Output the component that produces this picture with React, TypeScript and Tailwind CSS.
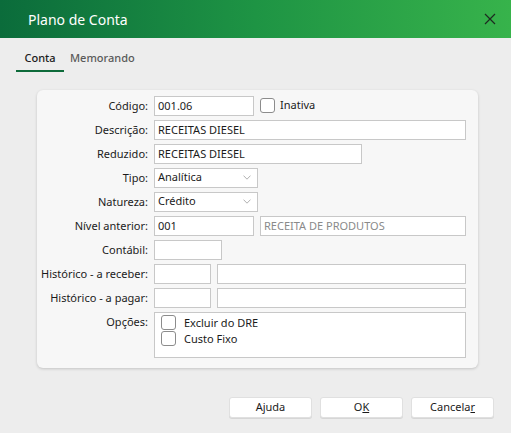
import React from "react";

const font = { fontFamily: '"Segoe UI", "Noto Sans", "Open Sans", sans-serif' };

function Label({ children }: { children: React.ReactNode }) {
  return (
    <div className="w-[117px] shrink-0 whitespace-nowrap pr-[6px] text-right text-[11px] leading-[20px] text-[#1b1b1b]">
      {children}
    </div>
  );
}

function Field({ w, value, muted }: { w: string; value?: string; muted?: boolean }) {
  return (
    <div
      className={`${w} h-[20px] border border-[#c8c8c8] bg-white px-[3px] text-[11px] leading-[18px] ${muted ? "text-[#8a8a8a]" : "text-[#1b1b1b]"}`}
    >
      {value}
    </div>
  );
}

function Select({ value }: { value: string }) {
  return (
    <div className="flex h-[20px] w-[104px] items-center justify-between border border-[#c8c8c8] bg-white pl-[3px] pr-[6px] text-[11px] text-[#1b1b1b]">
      <span>{value}</span>
      <svg width="8" height="5" viewBox="0 0 8 5" fill="none" stroke="#a8a8a8" strokeWidth="0.9">
        <path d="M0.5 0.6 L4 4.2 L7.5 0.6" />
      </svg>
    </div>
  );
}

function Check() {
  return <div className="h-[15px] w-[15px] shrink-0 rounded-[3px] border border-[#8c8c8c] bg-white" />;
}

function Row({ label, children }: { label: string; children: React.ReactNode }) {
  return (
    <div className="flex items-start">
      <Label>{label}</Label>
      <div className="flex items-center gap-[6px]">{children}</div>
    </div>
  );
}

function Button({ children }: { children: React.ReactNode }) {
  return (
    <button className="h-[21px] w-[83px] rounded-[3px] border border-[#e0e0e0] bg-white text-[11px] text-[#1b1b1b] shadow-[0_1px_0_#d6d6d6]">
      {children}
    </button>
  );
}

export default function App() {
  return (
    <div className="flex h-[433px] w-[511px] flex-col overflow-hidden bg-[#ededed]" style={font}>
      <div className="flex h-[38px] shrink-0 items-center justify-between bg-linear-to-r from-[#0b6c3b] via-[#1e9444] to-[#37b34b] pl-[28px] pr-[15px]">
        <span className="text-[14px] text-white">Plano de Conta</span>
        <svg width="12" height="12" viewBox="0 0 12 12" stroke="#1d2a20" strokeWidth="1.2">
          <path d="M1 1 L11 11 M11 1 L1 11" />
        </svg>
      </div>

      <div className="flex pl-[16px] pt-[12px]">
        <div className="w-[48px] border-b-[2px] border-[#0e6b3b] pb-[3px] text-center text-[11px] font-medium text-[#1b1b1b]">
          Conta
        </div>
        <div className="pl-[6px] text-[11px] font-medium text-[#5a5a5a]">Memorando</div>
      </div>

      <div className="ml-[37px] mt-[18px] flex h-[278px] w-[441px] flex-col gap-[4px] rounded-[6px] bg-[#f7f7f7] pt-[6px] shadow-[0_1px_3px_rgba(0,0,0,0.18)]">
        <Row label="Código:">
          <Field w="w-[100px]" value="001.06" />
          <div className="flex items-center gap-[5px]">
            <Check />
            <span className="text-[11px] text-[#1b1b1b]">Inativa</span>
          </div>
        </Row>
        <Row label="Descrição:">
          <Field w="w-[312px]" value="RECEITAS DIESEL" />
        </Row>
        <Row label="Reduzido:">
          <Field w="w-[208px]" value="RECEITAS DIESEL" />
        </Row>
        <Row label="Tipo:">
          <Select value="Analítica" />
        </Row>
        <Row label="Natureza:">
          <Select value="Crédito" />
        </Row>
        <Row label="Nível anterior:">
          <Field w="w-[100px]" value="001" />
          <Field w="w-[206px]" value="RECEITA DE PRODUTOS" muted />
        </Row>
        <Row label="Contábil:">
          <Field w="w-[68px]" />
        </Row>
        <Row label="Histórico - a receber:">
          <Field w="w-[57px]" />
          <Field w="w-[249px]" />
        </Row>
        <Row label="Histórico - a pagar:">
          <Field w="w-[57px]" />
          <Field w="w-[249px]" />
        </Row>
        <Row label="Opções:">
          <div className="flex h-[46px] w-[312px] flex-col gap-[1px] border border-[#c8c8c8] bg-white pl-[6px] pt-[2px]">
            <div className="flex items-center gap-[8px] text-[11px] leading-[15px] text-[#1b1b1b]">
              <Check />
              Excluir do DRE
            </div>
            <div className="flex items-center gap-[8px] text-[11px] leading-[15px] text-[#1b1b1b]">
              <Check />
              Custo Fixo
            </div>
          </div>
        </Row>
      </div>

      <div className="mt-[29px] flex justify-end gap-[8px] pr-[17px]">
        <Button>Ajuda</Button>
        <Button>
          O<span className="underline">K</span>
        </Button>
        <Button>
          Cancela<span className="underline">r</span>
        </Button>
      </div>
    </div>
  );
}
